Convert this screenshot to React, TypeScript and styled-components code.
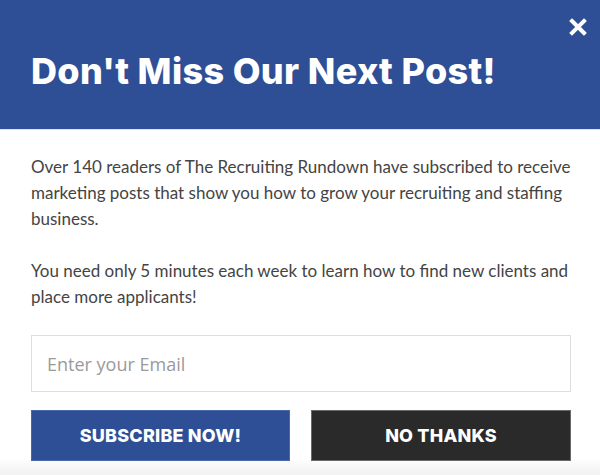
import React from 'react';
import styled, { createGlobalStyle } from 'styled-components';

const GlobalStyle = createGlobalStyle`
  html, body {
    margin: 0;
    padding: 0;
    background: #ffffff;
  }
`;

const Modal = styled.div`
  width: 600px;
  height: 475px;
  display: flex;
  flex-direction: column;
  background: linear-gradient(to bottom, #ffffff 0, #ffffff 458px, #f1f1f1 475px);
  overflow: hidden;
`;

const Header = styled.header`
  position: relative;
  height: 129px;
  flex-shrink: 0;
  display: flex;
  align-items: center;
  padding: 0 31px;
  background: #2e4f96;
  border-bottom: 1px solid #dde3ec;

  h1 {
    margin: 0;
    margin-top: 12px;
    font-family: Inter, 'Liberation Sans', sans-serif;
    font-weight: 800;
    font-size: 36px;
    letter-spacing: 0.35px;
    color: #ffffff;
  }
`;

const CloseButton = styled.button`
  position: absolute;
  top: 17px;
  right: 12px;
  width: 20px;
  height: 20px;
  padding: 0;
  border: none;
  background: none;
  cursor: pointer;
`;

const Body = styled.main`
  display: flex;
  flex-direction: column;
  padding: 24px 29px 0 31px;

  p {
    margin: 0 0 26px;
    font-family: Lato, 'Liberation Sans', sans-serif;
    font-size: 17px;
    line-height: 26px;
    color: #444444;
  }
`;

const EmailInput = styled.input`
  box-sizing: border-box;
  width: 540px;
  height: 57px;
  margin-top: 25px;
  padding: 0 15px;
  border: 1px solid #dedede;
  font-family: 'Open Sans', sans-serif;
  font-size: 18px;
  color: #444;
  outline: none;

  &::placeholder {
    color: #9a9a9a;
  }
`;

const Actions = styled.div`
  display: grid;
  grid-template-columns: 259px 260px;
  column-gap: 21px;
  margin-top: 18px;
`;

const Button = styled.button<{ $variant: 'primary' | 'dark' }>`
  height: 51px;
  border: 1px solid ${(p) => (p.$variant === 'primary' ? '#4a69aa' : '#6a6a6a')};
  background: ${(p) => (p.$variant === 'primary' ? '#2e4f96' : '#2a2a2a')};
  color: #ffffff;
  font-family: Inter, 'Liberation Sans', sans-serif;
  font-weight: 800;
  font-size: 18px;
  letter-spacing: 0.2px;
  text-transform: uppercase;
  cursor: pointer;
`;

const App: React.FC = () => {
  return (
    <>
      <GlobalStyle />
      <Modal>
        <Header>
          <h1>Don't Miss Our Next Post!</h1>
          <CloseButton aria-label="Close">
            <svg width="20" height="20" viewBox="0 0 20 20">
              <path d="M4 4 L16 16 M16 4 L4 16" stroke="#fff" strokeWidth="4" strokeLinecap="square" />
            </svg>
          </CloseButton>
        </Header>
        <Body>
          <p>
            Over 140 readers of The Recruiting Rundown have subscribed to receive marketing posts that show you how to grow
            your recruiting and staffing business.
          </p>
          <p style={{ marginBottom: 0 }}>
            You need only 5 minutes each week to learn how to find new clients and place more applicants!
          </p>
          <EmailInput type="email" placeholder="Enter your Email" />
          <Actions>
            <Button $variant="primary">Subscribe Now!</Button>
            <Button $variant="dark">No Thanks</Button>
          </Actions>
        </Body>
      </Modal>
    </>
  );
};

export default App;
